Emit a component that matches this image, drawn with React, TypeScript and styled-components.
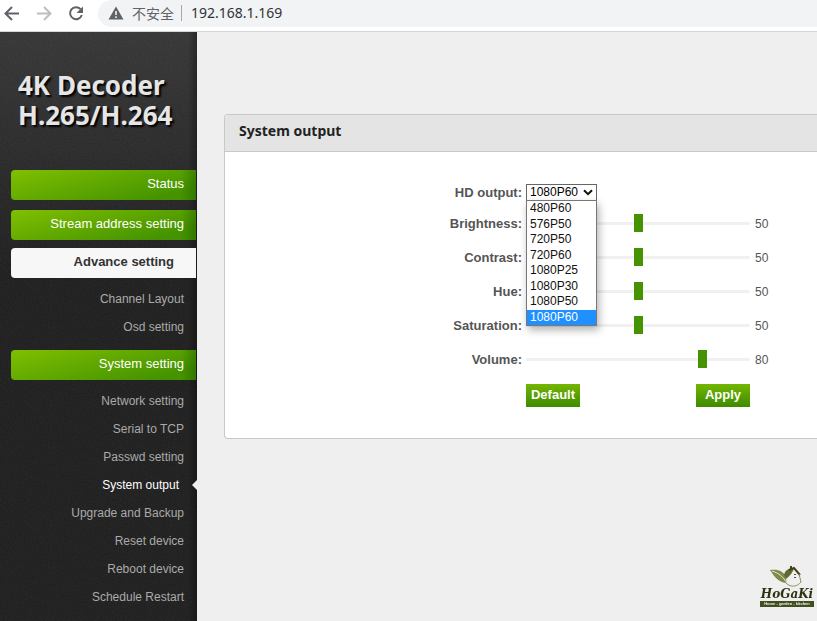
import React, { useState } from "react";
import styled, { createGlobalStyle, css } from "styled-components";

const sans = `"Liberation Sans", Arial, sans-serif`;
const humanist = `"Noto Sans", "Open Sans", sans-serif`;

const grain = encodeURIComponent(
  `<svg xmlns="http://www.w3.org/2000/svg" width="120" height="120"><filter id="g"><feTurbulence type="fractalNoise" baseFrequency="0.7" numOctaves="2" stitchTiles="stitch"/><feColorMatrix type="saturate" values="0"/></filter><rect width="120" height="120" filter="url(#g)" opacity="0.09"/></svg>`
);

const GlobalStyle = createGlobalStyle`
  *, *::before, *::after { box-sizing: border-box; }
  body { margin: 0; background: #efefef; font-family: ${sans}; font-size: 12px; color: #555; }
  ul { list-style: none; margin: 0; padding: 0; }
  a { color: inherit; text-decoration: none; }
`;

const Page = styled.div`
  display: flex;
  flex-direction: column;
  min-height: 100vh;
`;

const BrowserBar = styled.header`
  display: flex;
  height: 32px;
  padding-bottom: 4px;
  background: #fff;
  border-bottom: 1px solid #d6d6d6;
`;

const BarControls = styled.div`
  display: flex;
  align-items: center;
  gap: 12px;
  width: 98px;
  padding-left: 2px;
`;

const BarButton = styled.button`
  display: flex;
  width: 20px;
  height: 20px;
  padding: 0;
  border: 0;
  background: none;
  color: #5f6368;
  &:disabled { color: #bcbec1; }
`;

const AddressBar = styled.div`
  display: flex;
  flex: 1;
  align-items: center;
  padding: 0 0 2px 10px;
  background: #f1f3f4;
  border-radius: 14px 0 0 14px;
  font-size: 14px;
  line-height: 18px;
  color: #5f6368;
`;

const Security = styled.span`
  display: flex;
  align-items: center;
  gap: 8px;
  padding-right: 7px;
  font-family: "Noto Sans CJK SC", sans-serif;
`;

const Address = styled.input`
  flex: 1;
  min-width: 0;
  height: 16px;
  padding: 0 0 0 9px;
  border: 0;
  border-left: 1px solid #a5a8ab;
  background: none;
  font: 14px ${humanist};
  color: #303236;
  outline: 0;
`;

const Body = styled.div`
  display: flex;
  flex: 1;
`;

const Sidebar = styled.aside`
  width: 197px;
  flex-shrink: 0;
  padding: 38px 1px 0 11px;
  background:
    linear-gradient(to right, transparent 188px, rgba(0, 0, 0, 0.3)),
    url("data:image/svg+xml,${grain}"),
    linear-gradient(#343434, #282828 120px, #1c1c1c 240px, #1c1c1c);
`;

const Brand = styled.h1`
  margin: 0 0 40px 7px;
  font: bold 26px/30px ${humanist};
  color: #e6e6e6;
  text-shadow: 2px 2px 2px #000;
  white-space: nowrap;
`;

const MenuGroup = styled.section<{ $gap: number }>`
  margin-bottom: ${(p) => p.$gap}px;
`;

const MenuHeading = styled.a<{ $open?: boolean }>`
  display: block;
  height: 30px;
  padding: 0 12px;
  border-radius: 4px 0 0 4px;
  background: linear-gradient(to right, transparent 92%, rgba(0, 40, 0, 0.25)),
    linear-gradient(165deg, #80c000, #459300 85%);
  color: #fff;
  font-size: 13px;
  line-height: 27px;
  text-align: right;
  ${(p) =>
    p.$open &&
    css`
      padding-right: 22px;
      background: #f7f7f7;
      color: #333;
      font-weight: bold;
    `}
`;

const SubMenu = styled.ul`
  padding-top: 7px;
`;

const SubItem = styled.li<{ $active?: boolean }>`
  position: relative;
  height: 28px;
  padding-right: ${(p) => (p.$active ? 17 : 12)}px;
  line-height: 28px;
  text-align: right;
  color: ${(p) => (p.$active ? "#fff" : "#aaa")};
  ${(p) =>
    p.$active &&
    css`
      &::after {
        content: "";
        position: absolute;
        right: -1px;
        top: 9px;
        border: 5px solid transparent;
        border-left: 0;
        border-right-color: #efefef;
      }
    `}
`;

const Main = styled.main`
  flex: 1;
  min-width: 0;
  padding: 82px 0 0 27px;
`;

const Panel = styled.section`
  border: 1px solid #c8c8c8;
  border-right: 0;
  border-radius: 4px 0 0 4px;
  background: #fff;
`;

const PanelTitle = styled.h2`
  margin: 0;
  height: 37px;
  padding-left: 14px;
  border-bottom: 1px solid #c8c8c8;
  border-radius: 4px 0 0 0;
  background: #e4e4e4;
  font: bold 14px/32px ${humanist};
  color: #222;
`;

const Form = styled.form`
  padding: 27px 0 31px;
`;

const Row = styled.div<{ $height: number }>`
  display: grid;
  grid-template-columns: 297px 224px auto;
  column-gap: 4px;
  align-items: center;
  height: ${(p) => p.$height}px;
`;

const Label = styled.label`
  font-size: 13px;
  font-weight: bold;
  text-align: right;
  color: #555;
`;

const SelectWrap = styled.div`
  position: relative;
  width: 71px;
  height: 17px;
`;

const Select = styled.select`
  display: block;
  width: 100%;
  height: 17px;
  padding: 0 0 0 3px;
  appearance: none;
  border: 1px solid #666;
  border-radius: 0;
  background: #fff;
  font: 12px/15px ${sans};
  color: #000;
`;

const SelectArrow = styled.svg`
  position: absolute;
  right: 4px;
  top: 5px;
  pointer-events: none;
`;

const OptionList = styled.ul`
  position: absolute;
  z-index: 1;
  top: 16px;
  left: 0;
  display: grid;
  grid-auto-rows: 1fr;
  width: 71px;
  height: 126px;
  border: 1px solid #777;
  background: #fff;
  box-shadow: 2px 4px 8px rgba(0, 0, 0, 0.3);
  color: #111;
`;

const Option = styled.li<{ $selected: boolean }>`
  padding-left: 3px;
  line-height: 15px;
  ${(p) => p.$selected && "background: #1e90ff; color: #fff;"}
`;

const Range = styled.input`
  width: 100%;
  height: 18px;
  margin: 0;
  appearance: none;
  background: none;
  &::-webkit-slider-runnable-track {
    height: 3px;
    border-radius: 2px;
    background: #f0f0f0;
  }
  &::-webkit-slider-thumb {
    appearance: none;
    width: 9px;
    height: 18px;
    margin-top: -8px;
    background: #459300;
  }
`;

const Value = styled.output`
  padding: 1px 0 0 1px;
  font-size: 12px;
`;

const Actions = styled.div`
  display: flex;
  justify-content: space-between;
  width: 224px;
  margin: 8px 0 0 301px;
`;

const ActionButton = styled.button`
  width: 54px;
  height: 23px;
  padding: 0 0 2px;
  border: 0;
  background: linear-gradient(#74b600, #3d8b00);
  color: #fff;
  font: bold 13px ${sans};
`;

const Watermark = styled.div`
  position: fixed;
  right: 3px;
  bottom: 14px;
  display: flex;
  flex-direction: column;
  align-items: center;
  width: 54px;
  color: #2c3313;
`;

const WatermarkName = styled.span`
  font: italic bold 12px/13px "DejaVu Serif", serif;
`;

const WatermarkTag = styled.span`
  width: 100%;
  background: #414f1c;
  color: #eee;
  font: bold 4px/6px ${sans};
  text-align: center;
  white-space: nowrap;
`;

const modes = ["480P60", "576P50", "720P50", "720P60", "1080P25", "1080P30", "1080P50", "1080P60"];

const menu = [
  { title: "Status", gap: 10, items: [] },
  { title: "Stream address setting", gap: 8, items: [] },
  { title: "Advance setting", open: true, gap: 9, items: ["Channel Layout", "Osd setting"] },
  {
    title: "System setting",
    gap: 0,
    items: [
      "Network setting",
      "Serial to TCP",
      "Passwd setting",
      "System output",
      "Upgrade and Backup",
      "Reset device",
      "Reboot device",
      "Schedule Restart",
    ],
  },
];

function Slider({ label, initial }: { label: string; initial: number }) {
  const [value, setValue] = useState(initial);
  const id = label.toLowerCase();
  return (
    <Row $height={34}>
      <Label htmlFor={id}>{label}:</Label>
      <Range id={id} type="range" min={0} max={100} value={value} onChange={(e) => setValue(Number(e.target.value))} />
      <Value htmlFor={id}>{value}</Value>
    </Row>
  );
}

export default function App() {
  const [mode, setMode] = useState("1080P60");
  return (
    <Page>
      <GlobalStyle />
      <BrowserBar>
        <BarControls>
          <BarButton aria-label="Back">
            <svg width="20" height="20" viewBox="0 0 20 20" fill="none" stroke="currentColor" strokeWidth="2">
              <path d="M17 9.500H4M10 3L3.500 9.500L10 16" />
            </svg>
          </BarButton>
          <BarButton aria-label="Forward" disabled>
            <svg width="20" height="20" viewBox="0 0 20 20" fill="none" stroke="currentColor" strokeWidth="2">
              <path d="M3 9.500H16M10 3L16.500 9.500L10 16" />
            </svg>
          </BarButton>
          <BarButton aria-label="Reload">
            <svg width="20" height="20" viewBox="0 0 20 20" fill="none" stroke="currentColor" strokeWidth="2">
              <path d="M14.600 5.200A6 6 0 1 0 15.800 11" />
              <path d="M17 2.500V9H10.500Z" fill="currentColor" stroke="none" />
            </svg>
          </BarButton>
        </BarControls>
        <AddressBar>
          <Security>
            <svg width="16" height="14" viewBox="0 0 16 14">
              <path d="M8 0.500L15.500 13.500H0.500Z" fill="#5f6368" />
              <path d="M8 5V9M8 10.200V12" stroke="#f1f3f4" strokeWidth="1.600" />
            </svg>
            不安全
          </Security>
          <Address aria-label="Address" defaultValue="192.168.1.169" />
        </AddressBar>
      </BrowserBar>
      <Body>
        <Sidebar>
          <Brand>
            4K Decoder
            <br />
            H.265/H.264
          </Brand>
          <nav>
            {menu.map((group) => (
              <MenuGroup key={group.title} $gap={group.gap}>
                <MenuHeading href="#" $open={group.open}>
                  {group.title}
                </MenuHeading>
                {group.items.length > 0 && (
                  <SubMenu>
                    {group.items.map((item) => (
                      <SubItem key={item} $active={item === "System output"}>
                        <a href="#">{item}</a>
                      </SubItem>
                    ))}
                  </SubMenu>
                )}
              </MenuGroup>
            ))}
          </nav>
        </Sidebar>
        <Main>
          <Panel>
            <PanelTitle>System output</PanelTitle>
            <Form onSubmit={(e) => e.preventDefault()}>
              <Row $height={27}>
                <Label htmlFor="hd-output">HD output:</Label>
                <SelectWrap>
                  <Select id="hd-output" value={mode} onChange={(e) => setMode(e.target.value)}>
                    {modes.map((m) => (
                      <option key={m}>{m}</option>
                    ))}
                  </Select>
                  <SelectArrow width="10" height="7" viewBox="0 0 10 7" fill="none" stroke="#111" strokeWidth="2">
                    <path d="M1 1.200L5 5.200L9 1.200" />
                  </SelectArrow>
                  <OptionList role="listbox" aria-label="HD output">
                    {modes.map((m) => (
                      <Option key={m} role="option" aria-selected={m === mode} $selected={m === mode} onClick={() => setMode(m)}>
                        {m}
                      </Option>
                    ))}
                  </OptionList>
                </SelectWrap>
              </Row>
              <Slider label="Brightness" initial={50} />
              <Slider label="Contrast" initial={50} />
              <Slider label="Hue" initial={50} />
              <Slider label="Saturation" initial={50} />
              <Slider label="Volume" initial={80} />
              <Actions>
                <ActionButton type="button">Default</ActionButton>
                <ActionButton type="submit">Apply</ActionButton>
              </Actions>
            </Form>
          </Panel>
        </Main>
      </Body>
      <Watermark>
        <svg width="34" height="22" viewBox="0 0 34 22">
          <path d="M0 4C6 3 12 4 15 9C16 12 16 14 17 17C10 17 5 12 0 4Z" fill="#7d8a4a" />
          <path d="M2 5C9 7 13 11 17 17" stroke="#e8ead8" fill="none" />
          <path d="M14 9C15 4 19 2 24 2C23 6 20 10 16 13Z" fill="#5f6b33" />
          <path d="M19 4L24 2L30 9M21 0V3" stroke="#47401f" strokeWidth="2" fill="none" />
          <path d="M29 8L31 16C27 21 20 22 15 16" stroke="#8b8f62" fill="none" />
          <path d="M24 8H26V9H24ZM24 11H26V12H24Z" fill="#5b552e" />
        </svg>
        <WatermarkName>HoGaKi</WatermarkName>
        <WatermarkTag>Home - garden - kitchen</WatermarkTag>
      </Watermark>
    </Page>
  );
}
